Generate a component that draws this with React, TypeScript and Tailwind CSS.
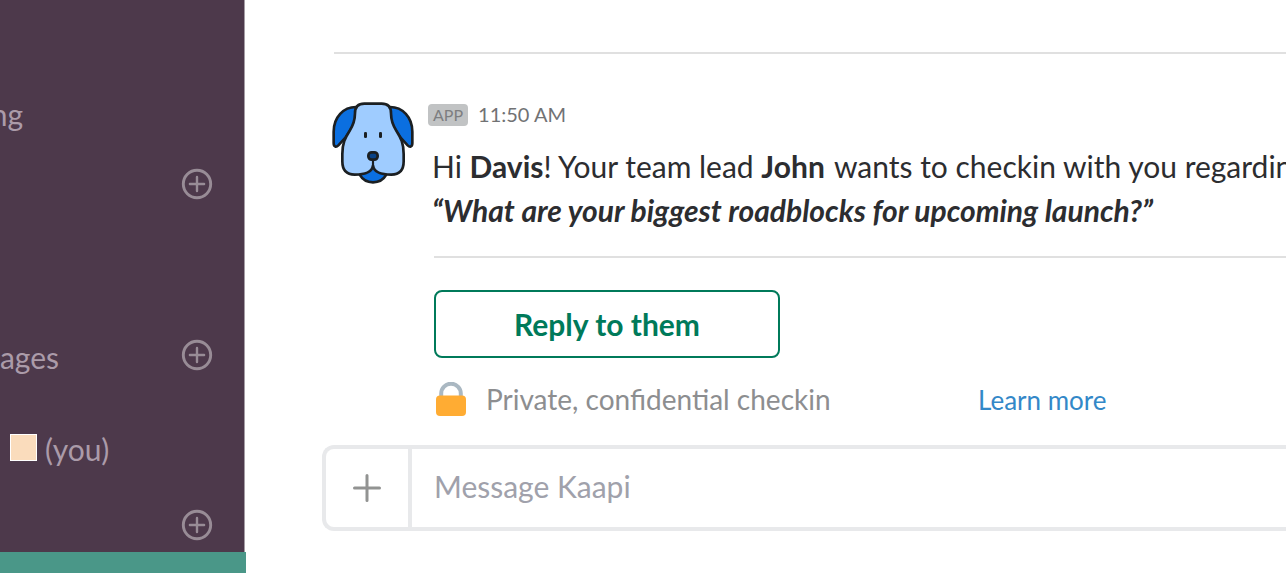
import React from 'react';

function CirclePlus() {
  return (
    <svg width="32" height="32" viewBox="0 0 32 32" fill="none" stroke="#988c96" strokeLinecap="round">
      <circle cx="16" cy="16" r="13.7" strokeWidth="2.9" />
      <path d="M16 8.9v14.2M8.9 16h14.2" strokeWidth="2.4" />
    </svg>
  );
}

function AddButton({ label }: { label: string }) {
  return (
    <button type="button" aria-label={label} className="ml-auto shrink-0">
      <CirclePlus />
    </button>
  );
}

function DogAvatar() {
  return (
    <svg
      className="shrink-0"
      width="82"
      height="84"
      viewBox="36 30 246 252"
      stroke="#1b1f22"
      strokeWidth="8"
      strokeLinejoin="round"
      strokeLinecap="round"
    >
      <path d="M119 254C128 270 143 277 159 277S190 270 199 254L159 228Z" fill="#0b6fe0" />
      <path d="M110 51C70 50 41 82 41 125V160C41 171 49 172 55 166L77 142C92 118 108 104 106 72Z" fill="#0b6fe0" />
      <path d="M208 51C248 50 277 82 277 125V160C277 171 269 172 263 166L241 142C226 118 210 104 212 72Z" fill="#0b6fe0" />
      <path
        d="M133 41H185C204 41 213 52 213 70C213 92 218 105 229 122C243 144 251 160 251 192V214C251 241 238 254 214 254C184 254 162 248 159 227C156 248 134 254 104 254C80 254 67 241 67 214V192C67 160 75 144 89 122C100 105 105 92 105 70C105 52 114 41 133 41Z"
        fill="#9fccff"
      />
      <path d="M159 210V230" fill="none" strokeWidth="6.5" />
      <rect x="145" y="187" width="28" height="22" rx="10" fill="#084287" />
      <rect x="132" y="126" width="9" height="18" rx="4" fill="#1b1f22" stroke="none" />
      <rect x="177" y="126" width="9" height="18" rx="4" fill="#1b1f22" stroke="none" />
    </svg>
  );
}

function Lock() {
  return (
    <svg className="shrink-0" width="30" height="34" viewBox="0 0 30 34">
      <path d="M5.2 16V11.5a9.8 9.8 0 0 1 19.6 0V16" fill="none" stroke="#aab8c2" strokeWidth="4" />
      <rect y="13.5" width="30" height="20.5" rx="4" fill="#ffac33" />
    </svg>
  );
}

function Sidebar() {
  return (
    <aside className="flex w-[246px] shrink-0 flex-col">
      <nav className="mr-px flex grow flex-col border-r border-[#a59da5] bg-[#4d394b] pt-24 pb-2 pr-[31px] text-[30px] leading-9 text-[#ab9ba9]">
        <div className="flex h-9 w-[23px] justify-end overflow-hidden">
          <span className="shrink-0">ng</span>
        </div>
        <div className="mt-[34px] flex h-9 items-center">
          <AddButton label="Add channel" />
        </div>
        <div className="mt-[135px] flex h-9 items-center">
          <div className="flex h-10 w-[59px] items-end justify-end overflow-hidden">
            <span className="shrink-0">ages</span>
          </div>
          <AddButton label="New message" />
        </div>
        <div className="mt-[58px] flex h-9 items-center gap-2 pl-[10px]">
          <span className="mb-1 size-[27px] border border-white bg-[#fadcbc]" />
          <span>(you)</span>
        </div>
        <div className="mt-10 flex h-9 items-center">
          <AddButton label="Add app" />
        </div>
      </nav>
      <div className="h-[21px] bg-[#4a9788]" />
    </aside>
  );
}

function Message() {
  return (
    <article className="ml-[10px] flex items-start gap-[14px] pt-[46px]">
      <DogAvatar />
      <div className="min-w-0 grow">
        <header className="flex items-start gap-[10px] pt-1 text-xl leading-[22px] text-[#717274]">
          <span className="rounded bg-[#c1c3c4] px-[5px] text-base leading-[22px] text-[#7d7e80]">APP</span>
          <time className="leading-5">11:50 AM</time>
        </header>
        <p className="mt-[18px] overflow-hidden pl-1 text-[30px] leading-[44px] whitespace-nowrap text-[#2c2d30]">
          Hi <b>Davis</b>! Your team lead <b className="mr-[2px]">John</b> wants to checkin with you regarding
          <br />
          <b>
            <i>“What are your biggest roadblocks for upcoming launch?”</i>
          </b>
        </p>
        <div className="pl-[6px]">
          <hr className="mt-6 border-t-2 border-[#e0e0e0]" />
          <button
            type="button"
            className="mt-8 block h-[68px] w-[346px] rounded-lg border-2 border-[#007a5a] text-[30px] leading-9 font-bold text-[#007a5a]"
          >
            Reply to them
          </button>
          <div className="mt-6 flex h-[34px] items-center pl-[2px] whitespace-nowrap">
            <Lock />
            <span className="ml-5 w-[492px] text-[28px] leading-[34px] text-[#8d8e90]">Private, confidential checkin</span>
            <a href="#learn-more" className="pt-[2px] text-[26px] leading-[34px] text-[#3388c8]">
              Learn more
            </a>
          </div>
        </div>
      </div>
    </article>
  );
}

function Composer() {
  return (
    <form className="mt-[29px] flex h-[86px] rounded-l-xl border-4 border-r-0 border-[#e8e9eb]">
      <button
        type="button"
        aria-label="Attach"
        className="flex w-[86px] shrink-0 items-center justify-center border-r-4 border-[#e8e9eb]"
      >
        <svg width="28" height="28" viewBox="0 0 28 28" stroke="#929392" strokeWidth="3" strokeLinecap="round">
          <path d="M14 1.5v25M1.5 14h25" />
        </svg>
      </button>
      <input
        type="text"
        aria-label="Message Kaapi"
        placeholder="Message Kaapi"
        className="min-w-0 grow px-[22px] pb-1 text-[30px] outline-none placeholder:text-[#a0a1ab]"
      />
    </form>
  );
}

export default function App() {
  return (
    <div className="flex min-h-screen bg-white font-['Lato',sans-serif]">
      <Sidebar />
      <main className="min-w-0 grow overflow-hidden pt-[52px] pl-[76px]">
        <hr className="ml-3 border-t-2 border-[#e0e0e0]" />
        <Message />
        <Composer />
      </main>
    </div>
  );
}
